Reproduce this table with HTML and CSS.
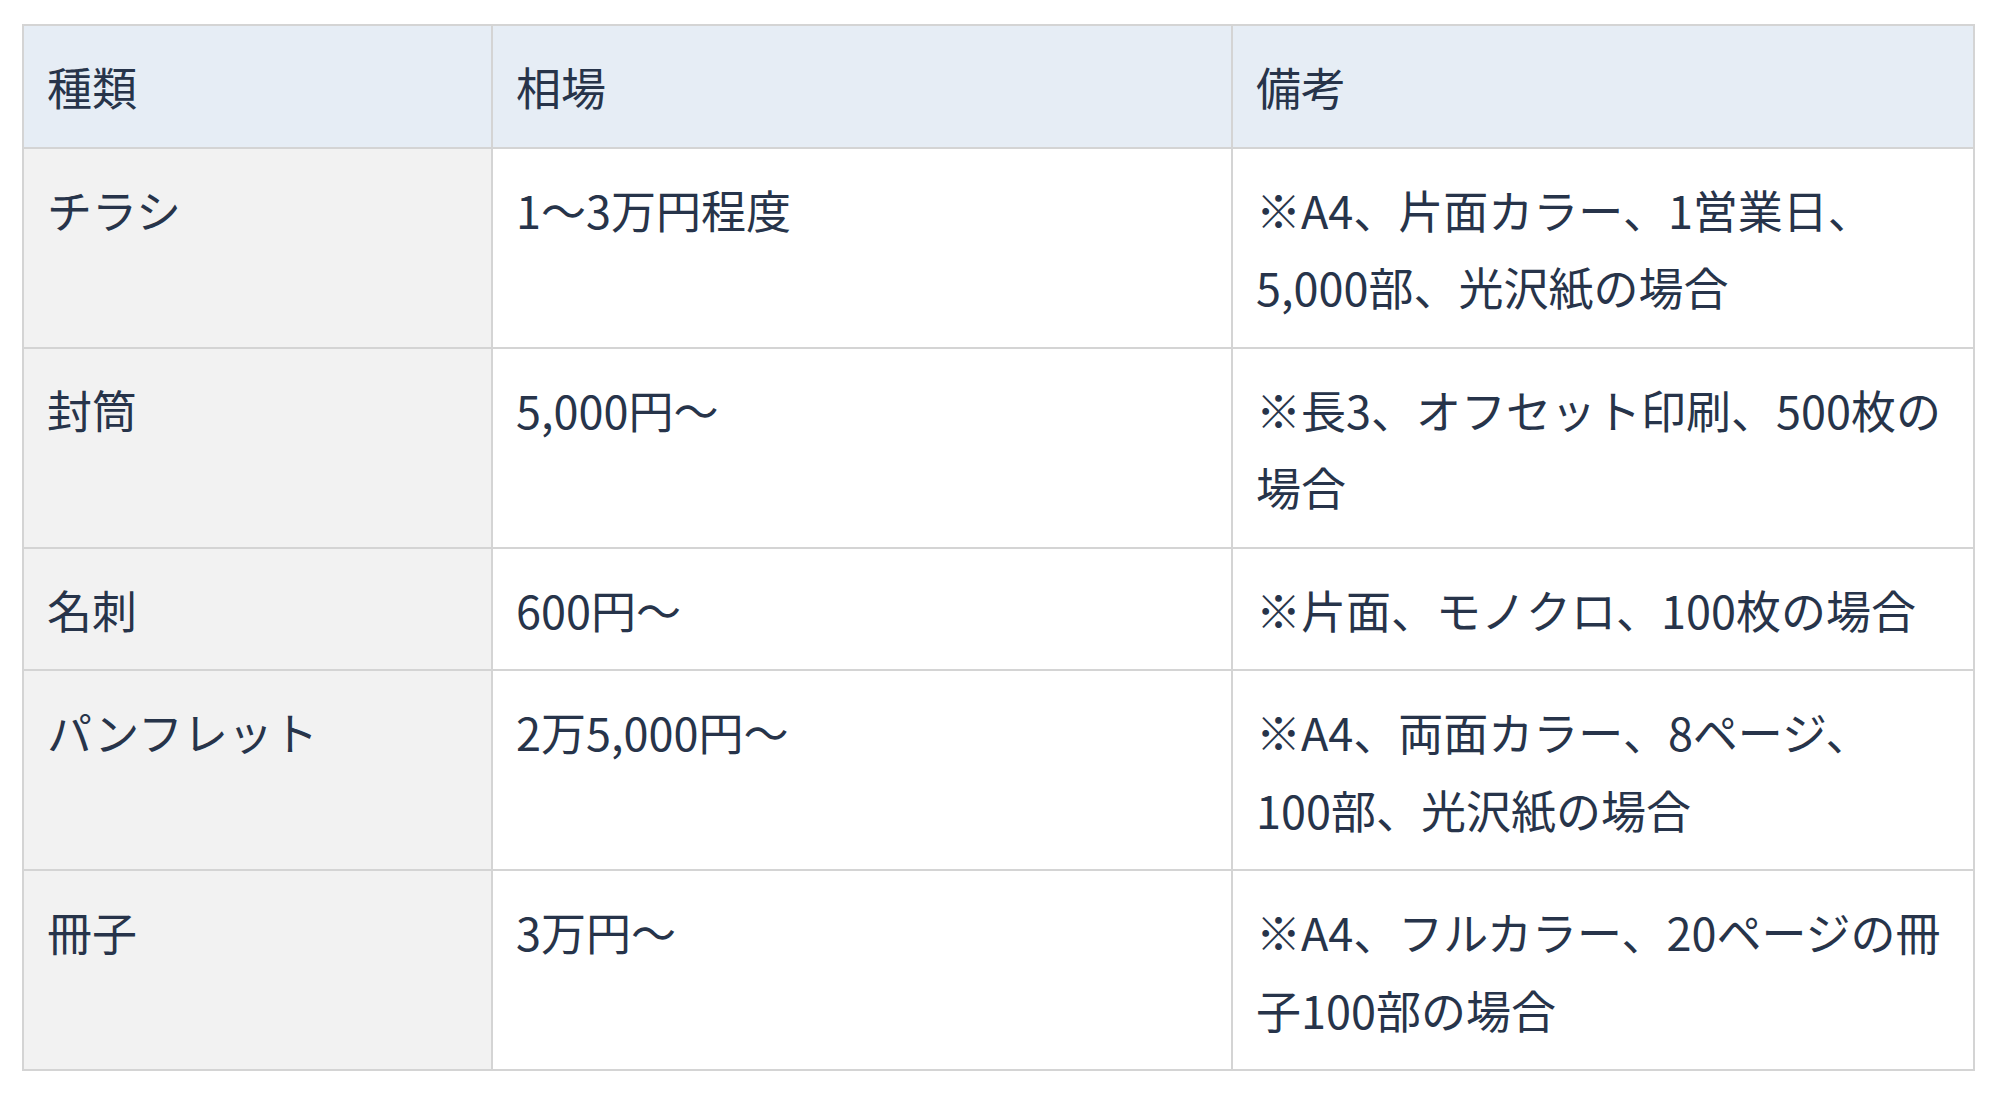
FILE: index.html
```html
<!DOCTYPE html>
<html lang="ja">
<head>
<meta charset="utf-8">
<title>印刷物の相場</title>
<link rel="stylesheet" href="styles.css">
</head>
<body>
<div class="wrap">
<table class="price-table">
  <colgroup>
    <col class="c-kind">
    <col class="c-price">
    <col class="c-note">
  </colgroup>
  <thead>
    <tr>
      <th>種類</th>
      <th>相場</th>
      <th>備考</th>
    </tr>
  </thead>
  <tbody>
    <tr>
      <td class="kind">チラシ</td>
      <td>1〜3万円程度</td>
      <td>※A4、片面カラー、1営業日、5,000部、光沢紙の場合</td>
    </tr>
    <tr>
      <td class="kind">封筒</td>
      <td>5,000円〜</td>
      <td>※長3、オフセット印刷、500枚の場合</td>
    </tr>
    <tr>
      <td class="kind">名刺</td>
      <td>600円〜</td>
      <td>※片面、モノクロ、100枚の場合</td>
    </tr>
    <tr>
      <td class="kind">パンフレット</td>
      <td>2万5,000円〜</td>
      <td>※A4、両面カラー、8ページ、<span class="nb">100部</span>、光沢紙の場合</td>
    </tr>
    <tr>
      <td class="kind">冊子</td>
      <td>3万円〜</td>
      <td>※A4、フルカラー、20ページの冊子100部の場合</td>
    </tr>
  </tbody>
</table>
</div>
</body>
</html>
```

FILE: styles.css
```css
html, body {
  margin: 0;
  padding: 0;
  background: #ffffff;
}

.wrap {
  padding: 24px 27px 0 22px;
}

.price-table {
  width: 1951px;
  table-layout: fixed;
  border-collapse: collapse;
  border: 2px solid #d4d4d4;
  font-family: "Noto Sans CJK JP", "Noto Sans", sans-serif;
  font-size: 45px;
  line-height: 77.5px;
  color: #27344a;
}

.c-kind { width: 469px; }
.c-price { width: 740px; }
.c-note { width: 742px; }

.price-table th,
.price-table td {
  border: 2px solid #d4d4d4;
  padding: 22px 24px 21px 23px;
  text-align: left;
  vertical-align: top;
  font-weight: 400;
}

.price-table th {
  background: #e6edf5;
}

.price-table td {
  background: #ffffff;
}

.price-table td.kind {
  background: #f2f2f2;
}

.nb {
  white-space: nowrap;
}
```
